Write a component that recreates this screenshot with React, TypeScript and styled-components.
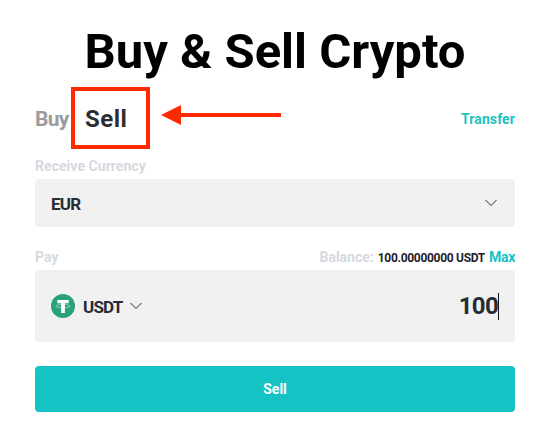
import React from "react";
import styled, { createGlobalStyle } from "styled-components";

const GlobalStyle = createGlobalStyle`
  * { box-sizing: border-box; }
  body { margin: 0; background: #fff; font-family: Roboto, "Liberation Sans", sans-serif; color: #1e2329; }
`;

const Page = styled.main`
  width: 553px;
  height: 438px;
  padding: 23px 38px 0 35px;
  overflow: hidden;
`;

const Title = styled.h1`
  margin: 0;
  height: 64px;
  font-size: 49px;
  font-weight: 700;
  line-height: 58px;
  letter-spacing: 0;
  text-align: center;
  white-space: nowrap;
  color: #000;
`;

const TabRow = styled.nav`
  display: flex;
  align-items: center;
  height: 62px;
`;

const Tab = styled.span`
  width: 36px;
  padding-top: 1px;
  font-size: 21px;
  font-weight: 700;
  line-height: 24px;
  letter-spacing: -0.7px;
  color: #9b9b9b;
`;

const ActiveTab = styled.span`
  width: 79px;
  height: 62px;
  padding-left: 10px;
  border: 4px solid #ff2a00;
  font-size: 24px;
  font-weight: 700;
  line-height: 56px;
  letter-spacing: 0.5px;
  color: #2b2f33;
`;

const Arrow = styled.svg`
  display: block;
  margin: -6px 0 0 11px;
`;

const Transfer = styled.span`
  margin-left: auto;
  padding-top: 2px;
  font-size: 14px;
  font-weight: 700;
  line-height: 18px;
  letter-spacing: 0.1px;
  color: #1cc3c2;
`;

const LabelRow = styled.div<{ $gap: number }>`
  display: flex;
  justify-content: space-between;
  height: 21px;
  margin-top: ${({ $gap }) => $gap}px;
  font-size: 14px;
  font-weight: 700;
  line-height: 16px;
  white-space: nowrap;
`;

const Label = styled.span<{ $spacing?: number }>`
  color: #d5d9e0;
  letter-spacing: ${({ $spacing = 0 }) => $spacing}px;
`;

const Balance = styled.span`
  display: flex;
  gap: 4px;
`;

const Amount = styled.span`
  font-size: 12px;
  font-weight: 700;
  line-height: 18px;
  letter-spacing: -0.3px;
`;

const Max = styled.span`
  letter-spacing: -0.3px;
  color: #15c2c4;
`;

const Field = styled.div<{ $height: number }>`
  display: flex;
  align-items: center;
  height: ${({ $height }) => $height}px;
  padding: 2px 16px 0;
  border-radius: 4px;
  background: #f1f1f1;
  color: #272b35;
`;

const Currency = styled.span<{ $offset?: number }>`
  margin-left: ${({ $offset = 0 }) => $offset}px;
  font-size: 17px;
  font-weight: 700;
  line-height: 20px;
  letter-spacing: -0.8px;
`;

const ChevronIcon = styled.svg<{ $push?: boolean }>`
  display: block;
  margin: ${({ $push }) => ($push ? "-2px 2px 0 auto" : "-2px 0 0 7px")};
`;

const Coin = styled.svg`
  display: block;
  margin-top: -2px;
`;

const Value = styled.span`
  margin: -2px 0 0 auto;
  height: 27px;
  border-right: 1px solid #111;
  font-size: 24px;
  font-weight: 700;
  line-height: 27px;
  letter-spacing: -0.7px;
`;

const SellButton = styled.button`
  display: block;
  width: 480px;
  height: 46px;
  margin-top: 24px;
  padding: 0;
  border: 0;
  border-radius: 4px;
  background: #15c3c5;
  color: #fff;
  text-align: center;
  font: 700 14px/46px Roboto, "Liberation Sans", sans-serif;
  letter-spacing: 0;
`;

const Chevron = ({ push }: { push?: boolean }) => (
  <ChevronIcon $push={push} width="12" height="8" viewBox="0 0 12 8" fill="none">
    <path d="M.5 1 6 6.5 11.5 1" stroke="#272b35" strokeWidth="1" />
  </ChevronIcon>
);

const Tether = () => (
  <Coin width="24" height="24" viewBox="0 0 24 24">
    <circle cx="12" cy="12" r="12" fill="#29a27b" />
    <path d="M6.3 6h11.4v3.2h-3.8V19h-3.8V9.2H6.3z" fill="#fff" />
    <ellipse cx="12" cy="12.2" rx="7.1" ry="1.6" fill="none" stroke="#fff" strokeWidth=".6" opacity=".75" />
  </Coin>
);

export default function App() {
  return (
    <>
      <GlobalStyle />
      <Page>
        <Title>Buy &amp; Sell Crypto</Title>
        <TabRow>
          <Tab>Buy</Tab>
          <ActiveTab>Sell</ActiveTab>
          <Arrow width="120" height="20" viewBox="0 0 120 20" fill="#ff2a00">
            <path d="M0 10 20 0v8h100v4H20v8z" />
          </Arrow>
          <Transfer>Transfer</Transfer>
        </TabRow>
        <LabelRow $gap={9}>
          <Label $spacing={0.05}>Receive Currency</Label>
        </LabelRow>
        <Field $height={48}>
          <Currency>EUR</Currency>
          <Chevron push />
        </Field>
        <LabelRow $gap={22}>
          <Label>Pay</Label>
          <Balance>
            <Label>Balance:</Label>
            <Amount>100.00000000 USDT</Amount>
            <Max>Max</Max>
          </Balance>
        </LabelRow>
        <Field $height={72}>
          <Tether />
          <Currency $offset={8}>USDT</Currency>
          <Chevron />
          <Value>100</Value>
        </Field>
        <SellButton>Sell</SellButton>
      </Page>
    </>
  );
}
